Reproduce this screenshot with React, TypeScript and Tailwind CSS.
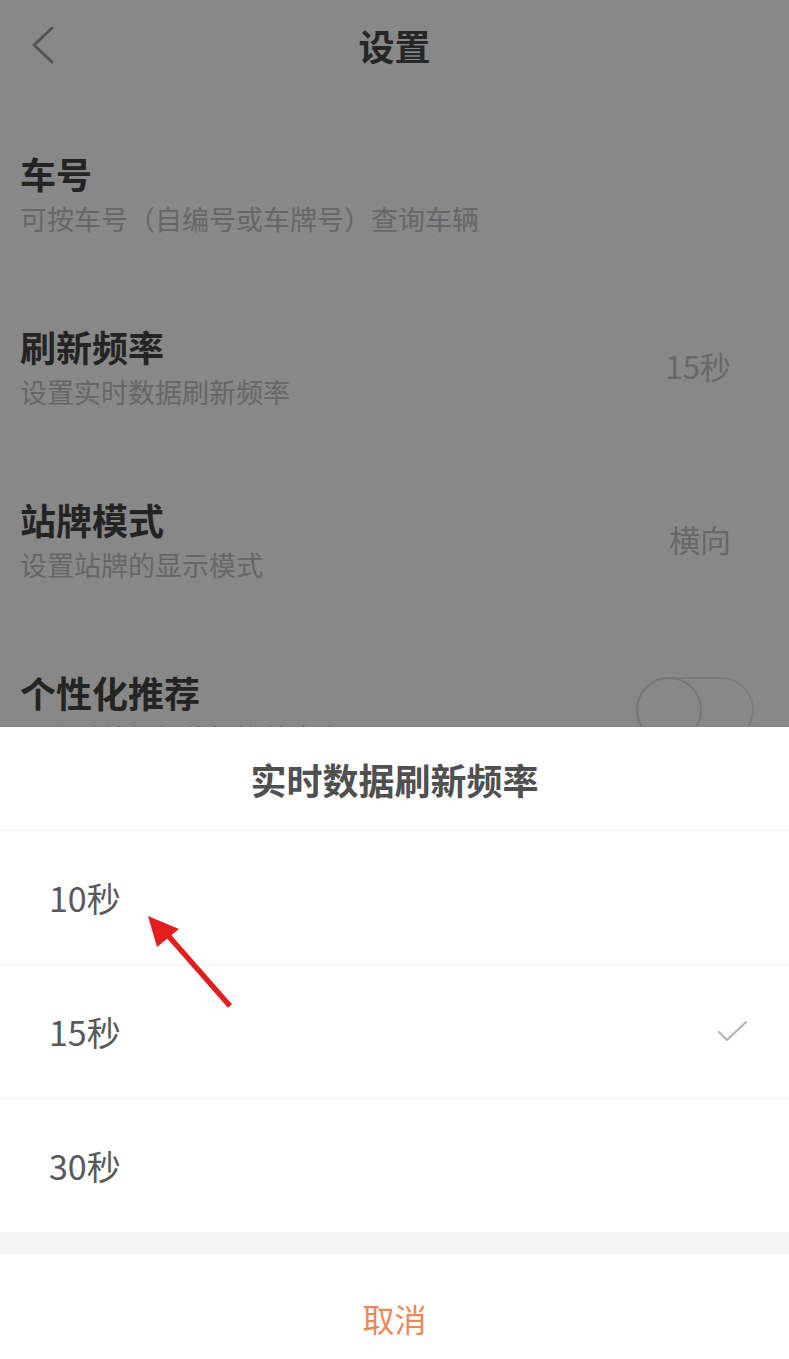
export default function App() {
  const rows = [
    { title: '车号', sub: '可按车号（自编号或车牌号）查询车辆', value: '' },
    { title: '刷新频率', sub: '设置实时数据刷新频率', value: '15秒' },
    { title: '站牌模式', sub: '设置站牌的显示模式', value: '横向' },
  ]
  const options = [
    { label: '10秒', checked: false },
    { label: '15秒', checked: true },
    { label: '30秒', checked: false },
  ]

  return (
    <div className="relative h-[1359px] w-full overflow-hidden bg-[#888888] font-['Noto_Sans_CJK_SC','Noto_Sans',sans-serif]">
      {/* Settings page behind the dim overlay */}
      <div className="grid h-[90px] grid-cols-[80px_1fr_80px] items-center">
        <div className="flex items-center pl-[30px]">
          <svg width="26" height="40" viewBox="0 0 26 40" fill="none">
            <path d="M22 3 L4 20 L22 37" stroke="#555555" strokeWidth="3" strokeLinecap="round" strokeLinejoin="round" />
          </svg>
        </div>
        <div className="text-center text-[36px] font-bold leading-none text-[#262626]">设置</div>
        <div />
      </div>

      <div className="pt-[18px]">
        {rows.map((r) => (
          <div key={r.title} className="flex h-[173px] items-center justify-between px-[20px]">
            <div>
              <div className="text-[36px] font-bold leading-[40px] text-[#242424]">{r.title}</div>
              <div className="mt-[8px] text-[27px] leading-[36px] text-[#676767]">{r.sub}</div>
            </div>
            {r.value && <div className="pb-[4px] pr-[38px] text-[31px] leading-none text-[#686868]">{r.value}</div>}
          </div>
        ))}
        <div className="flex h-[173px] items-center justify-between px-[20px]">
          <div>
            <div className="text-[36px] font-bold leading-[40px] text-[#242424]">个性化推荐</div>
            <div className="mt-[8px] text-[27px] leading-[36px] text-[#676767]">开启后将根据偏好推荐内容</div>
          </div>
          <div className="relative mb-[8px] mr-[15px] h-[66px] w-[118px] rounded-full border-2 border-[#7b7b7b]">
            <div className="absolute -left-[2px] -top-[2px] h-[66px] w-[66px] rounded-full border-2 border-[#777777]" />
          </div>
        </div>
      </div>

      {/* Bottom sheet */}
      <div className="absolute bottom-0 left-0 right-0 bg-white">
        <div className="flex h-[103px] items-center justify-center text-[36px] font-bold leading-none text-[#505050]">
          实时数据刷新频率
        </div>
        {options.map((o) => (
          <div
            key={o.label}
            className="flex h-[134px] items-center justify-between border-t border-[#f1f1f1] pl-[49px] pr-[40px]"
          >
            <span className="text-[34px] leading-none text-[#595959]">{o.label}</span>
            {o.checked && (
              <svg width="32" height="26" viewBox="0 0 32 26" fill="none">
                <path d="M2 13 L10 21 L29 3" stroke="#b5b5b5" strokeWidth="2.2" strokeLinecap="round" strokeLinejoin="round" />
              </svg>
            )}
          </div>
        ))}
        <div className="h-[22px] bg-[#f5f5f5]" />
        <div className="flex h-[105px] items-center justify-center pt-[22px] text-[32px] leading-none text-[#f0875a]">
          取消
        </div>
      </div>

      {/* Annotation arrow */}
      <svg
        className="pointer-events-none absolute left-0 top-0"
        width="789"
        height="1359"
        viewBox="0 0 789 1359"
      >
        <line x1="230" y1="1006" x2="165" y2="932" stroke="#e11f1f" strokeWidth="5.5" strokeLinecap="butt" />
        <polygon points="148,916 179,929 157,947" fill="#e11f1f" />
      </svg>
    </div>
  )
}
